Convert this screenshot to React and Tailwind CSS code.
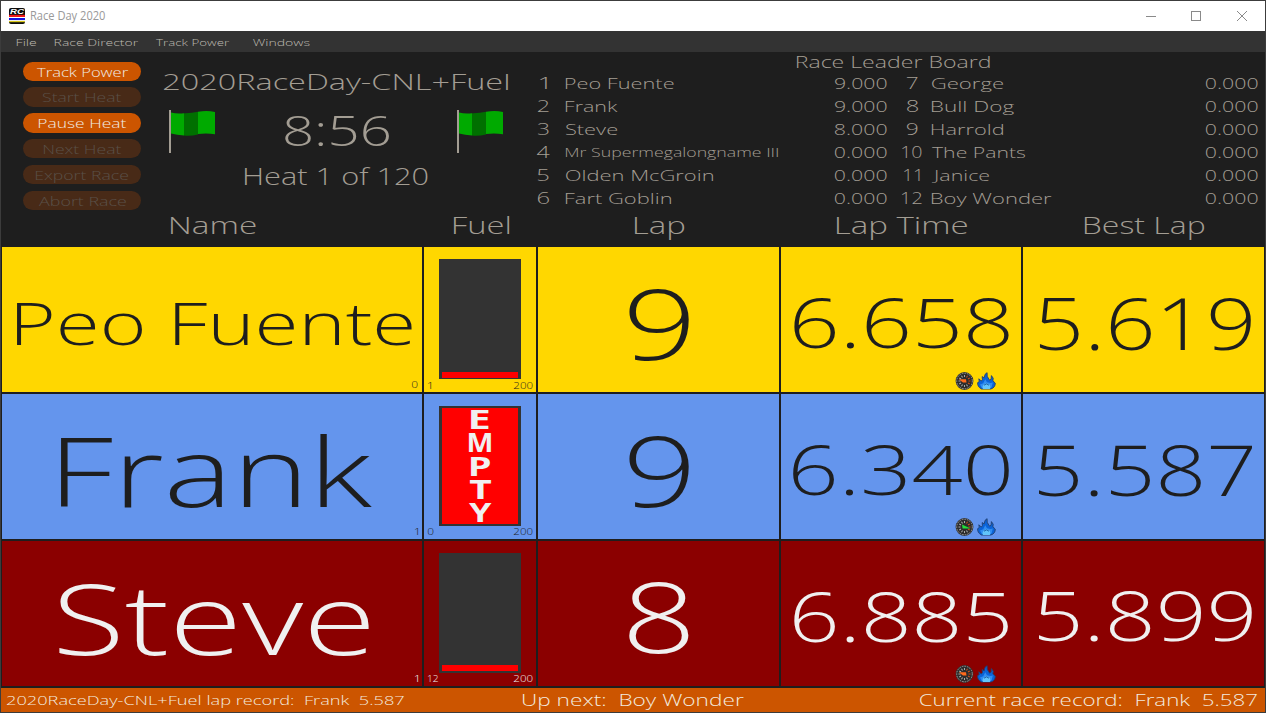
import React, { useMemo } from "react";

const CAP = 0.714;
let ctx = null;

function measure(text, weight) {
  if (!ctx) ctx = document.createElement("canvas").getContext("2d");
  ctx.font = `${weight} 200px "Open Sans", sans-serif`;
  const m = ctx.measureText(text);
  return {
    left: m.actualBoundingBoxLeft / 200,
    ink: (m.actualBoundingBoxLeft + m.actualBoundingBoxRight) / 200,
  };
}

/* Wide-set text: the box is `w` wide and `cap` (capital height) tall, and the glyphs are stretched to fill it. */
function Fit({ children, w, cap, weight = 300, className = "" }) {
  const size = cap / CAP;
  const { left, ink } = useMemo(() => measure(children, weight), [children, weight]);
  const k = w / (ink * size);
  return (
    <div className={"shrink-0 overflow-visible " + className} style={{ width: w, height: cap }}>
      <span
        className="block w-max origin-top-left whitespace-pre leading-[0.8]"
        style={{
          fontSize: size,
          fontWeight: weight,
          transform: `translate(${left * size * k}px, ${-0.074 * size}px) scaleX(${k})`,
        }}
      >
        {children}
      </span>
    </div>
  );
}

function Logo() {
  return (
    <svg width="16" height="16" viewBox="0 0 16 16" className="shrink-0">
      <rect width="16" height="16" rx="2" fill="#0c0c0c" />
      <rect y="6.8" width="16" height="2.2" fill="#f01818" />
      <rect y="9" width="16" height="1" fill="#fff" />
      <rect y="10" width="16" height="2" fill="#1414e0" />
      <rect y="12" width="16" height="1" fill="#eee" />
      <rect y="13" width="16" height="1.2" fill="#d8c818" />
      <text x="1" y="6.2" fontSize="8" fontWeight="800" fontStyle="italic" fontFamily="Liberation Sans, sans-serif" fill="#fff" textLength="14" lengthAdjust="spacingAndGlyphs">RC</text>
    </svg>
  );
}

function TitleBar() {
  return (
    <div className="flex h-[30px] shrink-0 items-center bg-white pl-2">
      <Logo />
      <Fit w={74} cap={9} weight={400} className="ml-[6px] mt-px text-[#999999]">Race Day 2020</Fit>
      <svg width="110" height="12" viewBox="0 0 110 12" className="-mt-px ml-auto mr-[15px]" fill="none" stroke="#8a8a8a" shapeRendering="crispEdges">
        <path d="M6 6.5h10" />
        <rect x="51.5" y="1.5" width="9" height="9" />
        <path d="M97 1l10 10M107 1L97 11" shapeRendering="auto" />
      </svg>
    </div>
  );
}

function MenuBar() {
  return (
    <div className="flex h-[21px] shrink-0 items-center bg-[#333333] pl-[15.5px] pt-[4px] text-[#bdb9b0]">
      <Fit w={19} cap={7} weight={350}>File</Fit>
      <Fit w={83} cap={7} weight={350} className="ml-[19px]">Race Director</Fit>
      <Fit w={73} cap={7} weight={350} className="ml-[18px]">Track Power</Fit>
      <Fit w={56.5} cap={7} weight={350} className="ml-[24px]">Windows</Fit>
    </div>
  );
}

const BUTTONS = [
  ["Track Power", 91, true],
  ["Start Heat", 78, false],
  ["Pause Heat", 87, true],
  ["Next Heat", 77, false],
  ["Export Race", 92, false],
  ["Abort Race", 87, false],
];

function Controls() {
  return (
    <div className="flex w-[140px] shrink-0 flex-col gap-[6.4px] pl-[22px] pt-[9.7px]">
      {BUTTONS.map(([label, w, on]) => (
        <button
          key={label}
          className={
            "flex h-[19.4px] w-[118px] items-center justify-center rounded-full pt-[2px] " +
            (on ? "bg-[#cc5500] text-[#f0ebe4]" : "bg-[#482a17] text-[#5a5048]")
          }
        >
          <Fit w={w} cap={9.5} weight={350}>{label}</Fit>
        </button>
      ))}
    </div>
  );
}

function Flag() {
  return (
    <svg width="47" height="43" viewBox="0 0 47 43" className="shrink-0">
      <rect width="2" height="43" fill="#a39d93" />
      <path d="M2 2.5Q8 4 15 3.2V25.6Q8 25 2 23.5Z" fill="#00aa00" />
      <path d="M15 3.2Q22 3.4 29 1.8V24.4Q22 26.3 15 25.6Z" fill="#007000" />
      <path d="M29 1.8Q38 0 46 2V24.3Q38 22.8 29 24Z" fill="#00aa00" />
    </svg>
  );
}

function RaceInfo() {
  return (
    <div className="flex w-[393px] shrink-0 flex-col items-center pt-[22.5px]">
      <Fit w={344} cap={16} className="-ml-[3px]">2020RaceDay-CNL+Fuel</Fit>
      <div className="mt-[19.5px] flex h-[43px] items-center self-stretch pl-[27.5px]">
        <Flag />
        <Fit w={104} cap={30.5} className="-mt-px ml-[69px]">8:56</Fit>
        <div className="ml-[68px]"><Flag /></div>
      </div>
      <Fit w={182.5} cap={17} className="-ml-[2px] mt-[16px]">Heat 1 of 120</Fit>
    </div>
  );
}

const LEFT = [
  ["1", 6.5, "Peo Fuente", 107.5, "9.000"],
  ["2", 10.5, "Frank", 51.5, "9.000"],
  ["3", 10.5, "Steve", 51, "8.000"],
  ["4", 12.5, "Mr Supermegalongname III", 212, "0.000"],
  ["5", 10.5, "Olden McGroin", 147, "0.000"],
  ["6", 11, "Fart Goblin", 105, "0.000"],
];
const RIGHT = [
  ["7", 10.5, "George", 71, "0.000"],
  ["8", 11, "Bull Dog", 82, "0.000"],
  ["9", 10.5, "Harrold", 71, "0.000"],
  ["10", 19.5, "The Pants", 93, "0.000"],
  ["11", 15.5, "Janice", 57, "0.000"],
  ["12", 19.5, "Boy Wonder", 119.5, "0.000"],
];

function Standings({ rows, className }) {
  return (
    <div className={className}>
      {rows.map(([pos, pw, name, nw, laps]) => (
        <div key={pos} className="flex h-[23px] items-center">
          <div className="flex w-[22px] shrink-0 justify-center">
            <Fit w={pw} cap={11.5}>{pos}</Fit>
          </div>
          <div className="flex-1 pl-[8.5px]">
            <Fit w={nw} cap={name.length > 20 ? 9 : 11}>{name}</Fit>
          </div>
          <Fit w={51.5} cap={11}>{laps}</Fit>
        </div>
      ))}
    </div>
  );
}

function LeaderBoard() {
  return (
    <div className="flex flex-1 flex-col">
      <div className="flex h-[20.7px] items-center pl-[263px]">
        <Fit w={192.5} cap={12.3}>Race Leader Board</Fit>
      </div>
      <div className="flex">
        <Standings rows={LEFT} className="ml-[-1.5px] w-[353.5px] [&>div>div:nth-child(2)]:pl-[11.5px]" />
        <Standings rows={RIGHT} className="ml-[15px] w-[356.5px]" />
      </div>
    </div>
  );
}

const COLS = "grid grid-cols-[420px_112px_241px_240px_241px] gap-x-[2px]";

function Headings() {
  return (
    <div className={COLS + " h-[35px] items-center pb-[6.5px] pl-[2px] [&>div]:justify-self-center"}>
      <Fit w={84.5} cap={16.5}>Name</Fit>
      <Fit w={55} cap={16.5}>Fuel</Fit>
      <Fit w={49} cap={16.5}>Lap</Fit>
      <Fit w={130} cap={16.5}>Lap Time</Fit>
      <Fit w={119} cap={16.5}>Best Lap</Fit>
    </div>
  );
}

function Gauge({ fast }) {
  const ticks = [0, 30, 60, 90, 120, 150, 180, 210, 240, 270, 300, 330];
  return (
    <svg width="19" height="18" viewBox="0 0 19 18">
      <circle cx="9.5" cy="9" r="8.3" fill="#2c2c2c" stroke="#303030" strokeWidth="1.2" />
      <circle cx="9.5" cy="9" r="7.8" fill="none" stroke="#999" strokeWidth="1" strokeDasharray="1.6 1" />
      {ticks.map((a) => (
        <path key={a} d="M9.5 3v2" stroke={a > 20 && a < 150 ? "#d8501c" : "#b5b5b5"} strokeWidth=".9" transform={`rotate(${a} 9.5 9)`} />
      ))}
      {fast ? (
        <path d="M7 6.6L15.5 10.6L7.6 10.6Z" fill="#22e03a" />
      ) : (
        <path d="M3.8 7.2L11 7.2L11.5 10.6L8 10.4Z" fill="#ff6a1c" />
      )}
    </svg>
  );
}

function Flame() {
  return (
    <svg width="19" height="18" viewBox="0 0 19 18">
      <path d="M4.5 17C1.5 15.5.3 13 .7 10.6L2.3 9.5L1.8 6.8L4.3 9L5.4 7.6L5.2 4.6L7.2 5.8L8.1 2.3L10.1.7L10.2 4.3L12.6 8.2L14.1 7.2L14.4 3.6L16.2 6.2L15.9 8.8L18.2 11C18.5 14 16.6 16.3 13.8 17Z" fill="#0a63d8" stroke="#22406e" strokeWidth=".9" />
      <path d="M5 16.3L3 12.5L6.2 11.2L8.3 7.2L10 10.2L13.5 11L15.8 10.5L14.7 15L13 16.5Z" fill="#2f8df2" />
      <path d="M6 17C4.6 14.2 6.8 11.6 9.6 11.6C12.6 11.7 14.2 14.6 12.8 17Z" fill="#62c4fb" />
      <path d="M7 13.2Q9.5 10.6 12 13.2" fill="none" stroke="#15569e" strokeWidth=".9" />
    </svg>
  );
}

const EMPTY = [["E", 17.5], ["M", 22], ["P", 19], ["T", 21], ["Y", 22.5]];

function FuelBar({ empty }) {
  if (empty) {
    return (
      <div className="flex h-[120px] w-[82px] flex-col items-center gap-[4.2px] border-x-[3.5px] border-y-[2px] border-[#333333] bg-[#ff0000] pt-[3.5px] text-[#f0f0f0]">
        {EMPTY.map(([c, w]) => (
          <Fit key={c} w={w} cap={19} weight={700}>{c}</Fit>
        ))}
      </div>
    );
  }
  return (
    <div className="flex h-[120px] w-[82px] flex-col justify-end bg-[#333333] px-[3px] pb-[1.5px]">
      <div className="h-[6px] bg-[#ff0000]" />
    </div>
  );
}

const LANES = [
  {
    bg: "bg-[#ffd700] text-[#1e1e1e]", name: ["Peo Fuente", 395, 41.5], nameClass: "pl-[4px] pt-[10px]", corner: ["0", 5.5],
    fuel: ["1", 3], empty: false, lap: ["9", 60, 69.5], last: ["6.658", 215, 48.5], best: ["5.619", 211, 51], fast: false,
  },
  {
    bg: "bg-[#6495ed] text-[#1e1e1e]", name: ["Frank", 311, 69], nameClass: "pl-[9px] pt-[13px]", corner: ["1", 3],
    fuel: ["0", 5.5], empty: true, lap: ["9", 60, 69.5], last: ["6.340", 216, 48.5], best: ["5.587", 213, 50], fast: true,
  },
  {
    bg: "bg-[#8b0000] text-[#f0f0f0]", name: ["Steve", 310, 70], nameClass: "pl-[3px] pt-[13px]", corner: ["1", 3],
    fuel: ["12", 10], empty: false, lap: ["8", 60, 69.5], last: ["6.885", 214, 48.5], best: ["5.899", 213, 49], fast: false,
  },
];

function Big({ value, className = "" }) {
  const [text, w, cap] = value;
  return (
    <div className={"flex h-full items-center justify-center " + className}>
      <Fit w={w} cap={cap}>{text}</Fit>
    </div>
  );
}

function Lane({ lane }) {
  return (
    <div className={COLS + " h-[145px]"}>
      <div className={"relative " + lane.bg}>
        <Big value={lane.name} className={lane.nameClass} />
        <div className="absolute bottom-[3px] right-[4.5px]">
          <Fit w={lane.corner[1]} cap={7} weight={350}>{lane.corner[0]}</Fit>
        </div>
      </div>
      <div className={"flex flex-col items-center pt-[12px] " + lane.bg}>
        <FuelBar empty={lane.empty} />
        <div className="mt-[3.5px] flex justify-between self-stretch pl-[4px] pr-[4px]">
          <Fit w={lane.fuel[1]} cap={7} weight={350}>{lane.fuel[0]}</Fit>
          <Fit w={18.5} cap={7} weight={350}>200</Fit>
        </div>
      </div>
      <div className={lane.bg}>
        <Big value={lane.lap} className="pl-px pt-[12px]" />
      </div>
      <div className={"relative " + lane.bg}>
        <Big value={lane.last} className="pt-[9.5px]" />
        <div className="absolute bottom-[2.5px] right-[25.5px] flex gap-[2.5px]">
          <Gauge fast={lane.fast} />
          <Flame />
        </div>
      </div>
      <div className={lane.bg}>
        <Big value={lane.best} className="pl-[3.5px] pt-[9px]" />
      </div>
    </div>
  );
}

function StatusBar() {
  return (
    <div className="mt-[2.5px] flex h-[24.5px] shrink-0 items-center bg-[#cc5500] pl-[5.5px] text-[#f3e9de]">
      <Fit w={397} cap={9.4} weight={350} className="mt-px">{"2020RaceDay-CNL+Fuel lap record:  Frank  5.587"}</Fit>
      <Fit w={220.5} cap={12} className="ml-[119.5px]">{"Up next:  Boy Wonder"}</Fit>
      <Fit w={337} cap={12} className="ml-[176.5px]">{"Current race record:  Frank  5.587"}</Fit>
    </div>
  );
}

export default function App() {
  return (
    <div className="flex h-[713px] w-[1266px] flex-col overflow-hidden border border-[#3c3c3c] bg-[#1e1e1e] font-['Open_Sans',sans-serif]">
      <TitleBar />
      <MenuBar />
      <div className="flex h-[160px] shrink-0 text-[#a39d93]">
        <Controls />
        <RaceInfo />
        <LeaderBoard />
      </div>
      <div className="shrink-0 text-[#a39d93]">
        <Headings />
      </div>
      <div className="flex shrink-0 flex-col gap-[1.75px] pl-px">
        {LANES.map((lane) => (
          <Lane key={lane.name[0]} lane={lane} />
        ))}
      </div>
      <StatusBar />
    </div>
  );
}
